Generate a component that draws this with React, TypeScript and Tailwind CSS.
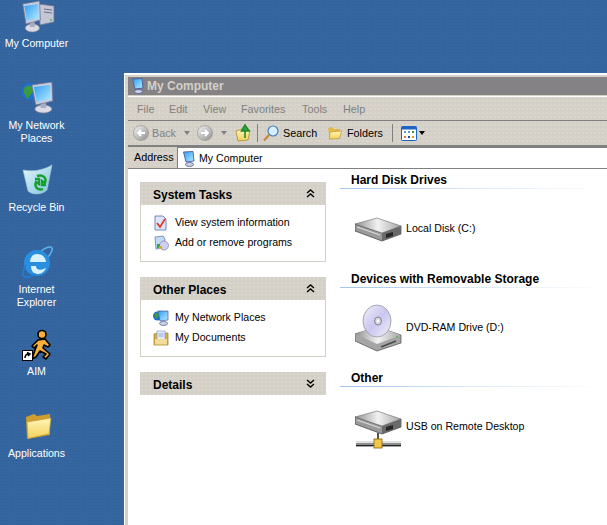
import type { ReactNode } from 'react'

const ui = 'font-["Liberation_Sans",Arial,sans-serif]'

function Monitor({ x = 0, y = 0, sx = 1 }: { x?: number; y?: number; sx?: number }) {
  return (
    <g transform={`translate(${x} ${y}) scale(${sx} 1)`}>
      <ellipse cx="13" cy="27" rx="9" ry="4" fill="#d9dbe6" stroke="#7c7f98" strokeWidth="0.7" />
      <rect x="10" y="20" width="6" height="6" fill="#a9adc0" />
      <path d="M1 3 L22 0 L23 19 L5 23 Z" fill="#c5cbe0" stroke="#6f7591" strokeWidth="0.8" />
      <path d="M3 5 L20 3 L21 17 L6 20 Z" fill="url(#screen)" />
    </g>
  )
}

function Gradients() {
  return (
    <svg width="0" height="0" className="absolute">
      <defs>
        <linearGradient id="screen" x1="0" y1="0" x2="1" y2="1">
          <stop offset="0" stopColor="#2f9df5" />
          <stop offset="1" stopColor="#b7ecff" />
        </linearGradient>
        <linearGradient id="folder" x1="0" y1="0" x2="0" y2="1">
          <stop offset="0" stopColor="#fff6b8" />
          <stop offset="1" stopColor="#f3d25c" />
        </linearGradient>
        <linearGradient id="bin" x1="0" y1="0" x2="1" y2="1">
          <stop offset="0" stopColor="#e6f7fb" />
          <stop offset="1" stopColor="#7fc2de" />
        </linearGradient>
        <linearGradient id="driveTop" x1="0" y1="0" x2="1" y2="0">
          <stop offset="0" stopColor="#8f8f8f" />
          <stop offset="0.5" stopColor="#f2f2f2" />
          <stop offset="1" stopColor="#a5a5a5" />
        </linearGradient>
        <linearGradient id="orb" x1="0" y1="0" x2="1" y2="1">
          <stop offset="0" stopColor="#f4f4f4" />
          <stop offset="1" stopColor="#8f8f8f" />
        </linearGradient>
        <linearGradient id="disc" x1="0" y1="0" x2="1" y2="1">
          <stop offset="0" stopColor="#f1f1f8" />
          <stop offset="0.5" stopColor="#c9c6ef" />
          <stop offset="1" stopColor="#f3f3f8" />
        </linearGradient>
      </defs>
    </svg>
  )
}

function MyComputerIcon() {
  return (
    <svg width="36" height="36" viewBox="0 0 36 36" className="mt-[-1px]">
      <path d="M20 4 L35 6 L35 22 L21 25 Z" fill="#c3c6d6" stroke="#6f7591" strokeWidth="0.8" />
      <path d="M25 9 L33 10 M25 12 L33 13" stroke="#6c7088" strokeWidth="1" />
      <circle cx="32" cy="20" r="1" fill="#46c04a" />
      <Monitor x={3} y={1} sx={0.8} />
    </svg>
  )
}

function NetworkIcon() {
  return (
    <svg width="36" height="36" viewBox="0 0 36 36">
      <circle cx="11" cy="9.5" r="8.5" fill="#1f6fd0" />
      <path d="M6 5 C11 2 15 5 14 9 C13 13 10 13 9 17 C6 14 3 9 6 5 Z" fill="#3d9c3a" />
      <Monitor x={12} y={0} sx={0.95} />
    </svg>
  )
}

function RecycleIcon() {
  return (
    <svg width="36" height="36" viewBox="0 0 36 36">
      <path d="M4 6 C14 8 25 6 33 1 L28 26 C23 31 13 31 9 27 Z" fill="url(#bin)" stroke="#9fc6d8" strokeWidth="0.6" />
      <path d="M18 12 C24 10 28 14 26 19 L23 17 L23 21 L27 21" fill="none" stroke="#15a02e" strokeWidth="2.4" />
      <path d="M24 25 C19 27 15 23 17 18 L20 20 L20 15 L16 15" fill="none" stroke="#15a02e" strokeWidth="2.4" />
    </svg>
  )
}

function IeIcon() {
  return (
    <svg width="36" height="36" viewBox="0 0 36 36">
      <path d="M22 5 C27 1 32 0 33 2 C34 5 31 9 28 12" fill="none" stroke="#58b5ee" strokeWidth="1.6" />
      <circle cx="18" cy="17" r="13" fill="#2b8fe0" />
      <path d="M18 8 C24 8 27 12 27 17 H11 C11 12 13 8 18 8 Z" fill="#d9f2ff" />
      <rect x="10" y="16" width="19" height="4" fill="#2b8fe0" />
      <path d="M12 20 H17 C17 24 21 25 27 22 C25 27 21 28 18 28 C14 28 12 24 12 20 Z" fill="#d9f2ff" />
      <path d="M7 19 C3 25 3 30 6 31 C9 32 13 30 17 28" fill="none" stroke="#1f7fd4" strokeWidth="1.8" />
    </svg>
  )
}

function AimIcon() {
  return (
    <svg width="36" height="36" viewBox="0 0 36 36">
      <circle cx="23" cy="6.5" r="4" fill="#fbb03b" stroke="#000" strokeWidth="1.6" />
      <path
        d="M19 12 L26 11 L31 17 L29 19 L25 17 L24 20 L31 26 L27 31 L24 29 L27 26 L21 23 L17 29 L13 31 L16 22 L18 17 L15 20 L13 18 Z"
        fill="#fbb03b"
        stroke="#000"
        strokeWidth="1.6"
        strokeLinejoin="round"
      />
      <rect x="3.5" y="22.5" width="10" height="10" fill="#fff" stroke="#000" strokeWidth="1" />
      <path d="M6 30 C6 27 7 26 10 26 M8 24.5 L11 26 L9 28" stroke="#000" strokeWidth="1.5" fill="none" />
    </svg>
  )
}

function FolderIcon() {
  return (
    <svg width="36" height="36" viewBox="0 0 36 36">
      <path d="M7 7 L15 4 L18 6 L31 4 L31 25 L8 29 Z" fill="#cf9e2d" />
      <path d="M8 12 L32 8 L30 24 L9 28.5 Z" fill="url(#folder)" stroke="#c49a34" strokeWidth="0.7" />
    </svg>
  )
}

function SmallComputer() {
  return (
    <svg width="12" height="16" viewBox="0 0 12 16">
      <path d="M0.5 1 L10 0.5 L11 10 L3 11 Z" fill="url(#screen)" stroke="#4d5a96" strokeWidth="0.9" />
      <ellipse cx="6.5" cy="13.5" rx="4" ry="2" fill="#cfd2e2" stroke="#4d5a96" strokeWidth="0.8" />
    </svg>
  )
}

function BackIcon({ arrow }: { arrow: 'left' | 'right' }) {
  return (
    <svg width="16" height="16" viewBox="0 0 16 16">
      <circle cx="8" cy="8" r="7.5" fill="url(#orb)" stroke="#8d8d8d" strokeWidth="0.6" />
      <path
        d={arrow === 'left' ? 'M12 8 H5 M8 5 L5 8 L8 11' : 'M4 8 H11 M8 5 L11 8 L8 11'}
        stroke="#fff"
        strokeWidth="1.8"
        fill="none"
      />
    </svg>
  )
}

function Caret({ color }: { color: string }) {
  return (
    <svg width="6" height="4" viewBox="0 0 6 4">
      <path d="M0 0 H6 L3 4 Z" fill={color} />
    </svg>
  )
}

function UpFolder() {
  return (
    <svg width="16" height="18" viewBox="0 0 16 18">
      <path d="M1 7 L8 5 L15 6 L13 16 L3 17 Z" fill="url(#folder)" stroke="#b28a2a" strokeWidth="0.8" />
      <path d="M10 14 L10 6 M6.5 7 L10 1 L14 7 Z" stroke="#1f8a2a" strokeWidth="1.6" fill="#2aa83a" />
    </svg>
  )
}

function SearchIcon() {
  return (
    <svg width="16" height="17" viewBox="0 0 16 17">
      <path d="M6 10 L1 15.5" stroke="#c9863a" strokeWidth="2.2" />
      <circle cx="10" cy="6" r="5" fill="#d5efff" stroke="#4a7fb5" strokeWidth="1.2" />
    </svg>
  )
}

function SmallFolder() {
  return (
    <svg width="15" height="14" viewBox="0 0 15 14">
      <path d="M1 2 L5 1 L7 3 L13 3 L13 12 L3 13 Z" fill="#e2b84a" />
      <path d="M3 6 L14.5 5 L12.5 12.5 L2.5 13 Z" fill="url(#folder)" stroke="#bf962f" strokeWidth="0.7" />
    </svg>
  )
}

function ViewsIcon() {
  return (
    <svg width="16" height="15" viewBox="0 0 16 15">
      <rect x="0.5" y="0.5" width="15" height="14" rx="1" fill="#fff" stroke="#1f63c5" />
      <rect x="0.5" y="0.5" width="15" height="3" fill="#1f63c5" />
      <rect x="3" y="5" width="2" height="2" fill="#6a93d8" />
      <rect x="7" y="5" width="2" height="2" fill="#6a93d8" />
      <rect x="11" y="5" width="2" height="2" fill="#2b9a3a" />
      <rect x="3" y="10" width="2" height="2" fill="#e8734a" />
      <rect x="7" y="10" width="2" height="2" fill="#27479c" />
      <rect x="11" y="10" width="2" height="2" fill="#cfa12a" />
    </svg>
  )
}

function InfoIcon() {
  return (
    <svg width="16" height="16" viewBox="0 0 16 16">
      <path d="M2 1 H10 L13 4 V15 H2 Z" fill="#dbe6fa" stroke="#5b6fa8" strokeWidth="0.8" />
      <path d="M4 8 L7 12 L12 4" stroke="#e0352b" strokeWidth="1.7" fill="none" />
    </svg>
  )
}

function ProgramsIcon() {
  return (
    <svg width="16" height="16" viewBox="0 0 16 16">
      <path d="M2 2 L10 1 L12 4 L11 13 L3 14 Z" fill="#c4d9f2" stroke="#5b6fa8" strokeWidth="0.7" />
      <circle cx="11" cy="10.5" r="4.5" fill="#cfd0f0" stroke="#71729c" strokeWidth="0.6" />
      <rect x="4" y="9" width="3" height="4" fill="#2ea83f" />
      <rect x="6" y="11" width="3" height="3" fill="#e0a52b" />
    </svg>
  )
}

function NetSmallIcon() {
  return (
    <svg width="16" height="16" viewBox="0 0 16 16">
      <circle cx="4.5" cy="6" r="4.5" fill="#1f6fd0" />
      <path d="M2 3 C5 2 7 4 5 7 L3 9 C1 7 1 5 2 3 Z" fill="#3d9c3a" />
      <path d="M5 1 L15 1 L15 10 L7 11 Z" fill="url(#screen)" stroke="#4d5a96" strokeWidth="0.7" />
      <ellipse cx="10.5" cy="13.5" rx="4" ry="2" fill="#cfd2e2" stroke="#4d5a96" strokeWidth="0.7" />
    </svg>
  )
}

function DocsIcon() {
  return (
    <svg width="16" height="16" viewBox="0 0 16 16">
      <path d="M1 4 L6 3 L15 3 V15 H1 Z" fill="#d9b04a" stroke="#9a7d24" strokeWidth="0.7" />
      <rect x="4" y="1" width="8" height="11" fill="#e4ecfa" stroke="#7d8cb5" strokeWidth="0.6" />
      <path d="M5.5 4 H10.5 M5.5 6 H10.5" stroke="#6f9ad8" strokeWidth="0.8" />
      <path d="M2 9 H14 V14.5 H2 Z" fill="#f3dc97" />
    </svg>
  )
}

function DriveBody({ y = 0 }: { y?: number }) {
  return (
    <g transform={`translate(0 ${y})`}>
      <path d="M0 6 L27 15 L46 8 L46 16 L27 23 L0 13 Z" fill="#9a9a9a" stroke="#3c3c3c" strokeWidth="0.7" />
      <path d="M27 15 L46 8 L46 16 L27 23 Z" fill="#6a6a6a" />
      <path d="M31 16 L38 14 L38 18 L31 20 Z" fill="#272727" />
      <path d="M0 6 L22 0 L46 8 L27 15 Z" fill="url(#driveTop)" stroke="#6a6a6a" strokeWidth="0.6" />
      <path d="M2 9 L25 17" stroke="#d9d9d9" strokeWidth="1.2" />
    </g>
  )
}

function HddIcon() {
  return (
    <svg width="48" height="48" viewBox="0 0 48 48">
      <DriveBody y={13} />
    </svg>
  )
}

function DvdIcon() {
  return (
    <svg width="48" height="48" viewBox="0 0 48 48">
      <path d="M0 30 L22 23 L46 31 L46 39 L22 47 L0 37 Z" fill="#a5a5a5" stroke="#4e4e4e" strokeWidth="0.7" />
      <path d="M0 30 L22 23 L46 31 L22 40 Z" fill="url(#driveTop)" />
      <path d="M26 43 L41 37" stroke="#4a4a4a" strokeWidth="1.6" />
      <circle cx="42" cy="33" r="0.9" fill="#46c04a" />
      <ellipse cx="22" cy="17" rx="14" ry="16" fill="url(#disc)" stroke="#8a8a98" strokeWidth="0.7" />
      <ellipse cx="23" cy="17" rx="3.4" ry="4" fill="#d9d9e0" stroke="#6b6b78" strokeWidth="0.8" />
      <circle cx="23" cy="17" r="1.2" fill="#fff" />
    </svg>
  )
}

function UsbIcon() {
  return (
    <svg width="48" height="48" viewBox="0 0 48 48">
      <DriveBody y={8} />
      <rect x="22" y="30" width="2" height="8" fill="#555" />
      <rect x="1" y="38" width="45" height="5" fill="#8d8d8d" />
      <rect x="1" y="38" width="45" height="2" fill="#e2e2e2" />
      <rect x="1" y="42" width="45" height="1.4" fill="#222" />
      <rect x="19" y="36" width="8" height="9" fill="#f3c64a" stroke="#8f6e17" strokeWidth="0.9" />
    </svg>
  )
}

function Chevrons({ down }: { down?: boolean }) {
  return (
    <svg width="9" height="9" viewBox="0 0 9 9" className="mb-[3px]">
      <path
        d={down ? 'M1 1 L4.5 4 L8 1 M1 5 L4.5 8 L8 5' : 'M1 4 L4.5 1 L8 4 M1 8 L4.5 5 L8 8'}
        stroke="#000"
        strokeWidth="1.4"
        fill="none"
      />
    </svg>
  )
}

function DesktopItem({ icon, label }: { icon: ReactNode; label: string }) {
  return (
    <div className="flex h-[82px] w-[73px] flex-col items-center">
      <div className="flex h-9 w-9 shrink-0 items-center justify-center">{icon}</div>
      <div className="mt-px w-[66px] text-center text-[10.6px] leading-[13px] text-white">{label}</div>
    </div>
  )
}

function TaskPanel({ title, down, children }: { title: string; down?: boolean; children?: ReactNode }) {
  return (
    <div className="w-[186px]">
      <div className="flex h-[23px] items-center justify-between bg-[#d4d0c8] bg-[radial-gradient(#d9d6ce_1px,transparent_1px)] bg-[length:4px_4px] pl-[13px] pr-[11px] pt-[2px]">
        <span className="text-xs font-bold text-black">{title}</span>
        <Chevrons down={down} />
      </div>
      {children && (
        <div className="flex h-[57px] flex-col gap-1 border border-t-0 border-[#d4d0c8] bg-white px-3 pt-[10px]">
          {children}
        </div>
      )}
    </div>
  )
}

function TaskRow({ icon, label }: { icon: ReactNode; label: string }) {
  return (
    <div className="flex h-4 items-center gap-[6px] text-[10.6px] text-black">
      {icon}
      <span>{label}</span>
    </div>
  )
}

function DriveSection({ title, icon, label }: { title: string; icon: ReactNode; label: string }) {
  return (
    <div className="h-[99px]">
      <div className="pl-[13px] text-xs font-bold leading-[15px] text-black">{title}</div>
      <div className="ml-[2px] h-px bg-gradient-to-r from-[#9fc4ee] via-[#dbe8f7] to-white" />
      <div className="mt-4 flex h-12 items-center gap-[3px] pl-[17px] text-[10.6px] text-black">
        {icon}
        <span>{label}</span>
      </div>
    </div>
  )
}

export default function App() {
  return (
    <div
      className={`${ui} relative h-[525px] w-full overflow-hidden bg-[#36669f] bg-[radial-gradient(#2f5f99_1px,transparent_1px)] bg-[length:3px_3px]`}
    >
      <Gradients />
      <div className="flex flex-col">
        <DesktopItem icon={<MyComputerIcon />} label="My Computer" />
        <DesktopItem icon={<NetworkIcon />} label="My Network Places" />
        <DesktopItem icon={<RecycleIcon />} label="Recycle Bin" />
        <DesktopItem icon={<IeIcon />} label="Internet Explorer" />
        <DesktopItem icon={<AimIcon />} label="AIM" />
        <DesktopItem icon={<FolderIcon />} label="Applications" />
      </div>

      {/* window runs off the right and bottom of the shot */}
      <div className="absolute left-[124px] top-[73px] flex h-[452px] w-[483px] flex-col border-l border-t-2 border-white bg-[#d4d0c8] bg-[radial-gradient(#d9d6ce_1px,transparent_1px)] bg-[length:4px_4px]">
        <div className="ml-[3px] mt-[2px] flex h-[18px] shrink-0 items-center gap-[3px] bg-[#848284] pl-[4px] text-xs font-bold text-[#d4d0c8]">
          <SmallComputer />
          <span>My Computer</span>
        </div>
        <div className="ml-[3px] mt-px h-px shrink-0 bg-white" />
        <div className="ml-[3px] flex h-[24px] shrink-0 items-center border-b border-[#808080] pt-[2px] text-[10.8px] text-[#808080]">
          <span className="ml-[9px] w-[32px]">File</span>
          <span className="w-[34px]">Edit</span>
          <span className="w-[38px]">View</span>
          <span className="w-[61px]">Favorites</span>
          <span className="w-[41px]">Tools</span>
          <span>Help</span>
        </div>
        <div className="ml-[3px] flex h-[26px] shrink-0 items-center border-b-2 border-[#808080] pl-[5px] text-[10.8px] text-black">
          <BackIcon arrow="left" />
          <span className="ml-[3px] w-[27px] text-[#808080]">Back</span>
          <span className="ml-[5px] flex w-[13px]">
            <Caret color="#808080" />
          </span>
          <BackIcon arrow="right" />
          <span className="ml-2 flex w-[14px]">
            <Caret color="#808080" />
          </span>
          <UpFolder />
          <div className="ml-[6px] h-[18px] w-px bg-[#808080]" />
          <span className="ml-[5px]">
            <SearchIcon />
          </span>
          <span className="ml-1 w-[44px]">Search</span>
          <SmallFolder />
          <span className="ml-[5px] w-[45px]">Folders</span>
          <div className="h-[18px] w-px bg-[#808080]" />
          <span className="ml-2">
            <ViewsIcon />
          </span>
          <span className="ml-[2px]">
            <Caret color="#000" />
          </span>
        </div>
        <div className="ml-[3px] flex h-[22px] shrink-0 items-center border-b border-[#808080] text-[10.8px]">
          <span className="ml-[6px] w-[43px] text-black">Address</span>
          <div className="flex h-[21px] flex-1 items-center gap-[4px] border-l border-t border-[#808080] bg-white pl-[5px] pt-px text-[10.6px]">
            <SmallComputer />
            <span className="text-black">My Computer</span>
          </div>
        </div>

        <div className="flex min-h-0 flex-1 border-l-[3px] border-[#d4d0c8] bg-white">
          <div className="flex w-[210px] shrink-0 flex-col gap-[15px] pl-3 pt-[13px]">
            <TaskPanel title="System Tasks">
              <TaskRow icon={<InfoIcon />} label="View system information" />
              <TaskRow icon={<ProgramsIcon />} label="Add or remove programs" />
            </TaskPanel>
            <TaskPanel title="Other Places">
              <TaskRow icon={<NetSmallIcon />} label="My Network Places" />
              <TaskRow icon={<DocsIcon />} label="My Documents" />
            </TaskPanel>
            <TaskPanel title="Details" down />
          </div>
          <div className="flex-1 pt-1">
            <DriveSection title="Hard Disk Drives" icon={<HddIcon />} label="Local Disk (C:)" />
            <DriveSection title="Devices with Removable Storage" icon={<DvdIcon />} label="DVD-RAM Drive (D:)" />
            <DriveSection title="Other" icon={<UsbIcon />} label="USB on Remote Desktop" />
          </div>
        </div>
      </div>
    </div>
  )
}
